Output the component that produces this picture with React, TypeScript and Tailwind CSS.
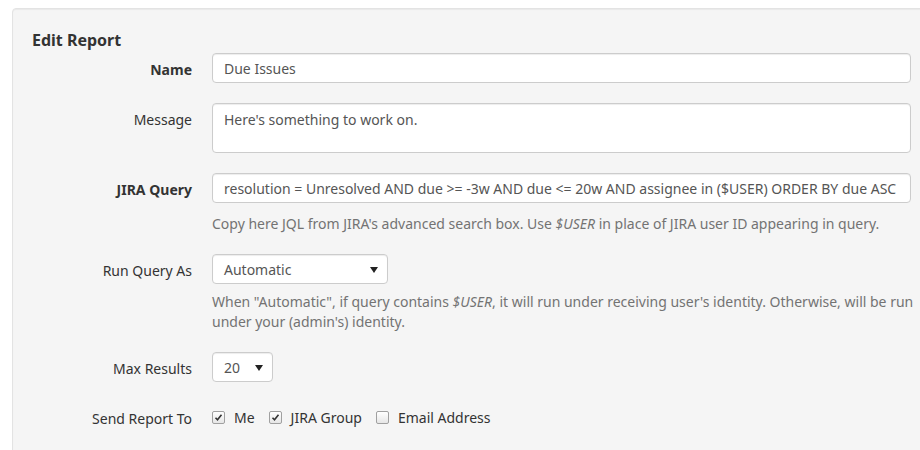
import React from 'react';

const inputCls =
  'h-[30px] rounded border border-[#cccccc] bg-white px-[11px] text-[14px] text-[#555] shadow-[inset_0_1px_1px_rgba(0,0,0,0.075)]';

function Caret() {
  return (
    <svg width="8" height="6" viewBox="0 0 8 6" className="absolute right-[9px] top-[12px]">
      <path d="M0 0h8L4 6z" fill="#222" />
    </svg>
  );
}

function Row({ label, bold, children, className }: { label: string; bold?: boolean; children: React.ReactNode; className?: string }) {
  return (
    <div className={`flex ${className ?? ''}`}>
      <div className={`w-[160px] shrink-0 pt-[6px] text-right ${bold ? 'font-bold' : ''}`}>{label}</div>
      <div className="ml-[20px] w-[699px] shrink-0">{children}</div>
    </div>
  );
}

function Check({ checked, label }: { checked?: boolean; label: string }) {
  return (
    <label className="mr-[14px] flex items-center">
      <span className="mr-[9px] flex h-[13px] w-[13px] items-center justify-center rounded-[2px] border border-[#a0a0a0] bg-gradient-to-b from-white to-[#e6e6e6]">
        {checked && (
          <svg width="9" height="9" viewBox="0 0 9 9">
            <path d="M1.5 4.8l2 2 4-5" stroke="#333" strokeWidth="1.6" fill="none" />
          </svg>
        )}
      </span>
      {label}
    </label>
  );
}

export default function App() {
  return (
    <div className="h-[450px] w-[920px] overflow-hidden bg-white pl-[12px] pt-[8px] [font-family:'Liberation_Sans',Arial,sans-serif] text-[14px] text-[#333]">
      <div className="h-[460px] w-[940px] rounded-[4px] border border-[#e3e3e3] bg-[#f5f5f5] pl-[19px] pt-[21px] shadow-[inset_0_1px_1px_rgba(0,0,0,0.05)]">
        <h2 className="text-[16px] font-bold leading-[20px]">Edit Report</h2>
        <Row label="Name" bold className="mt-[3px]">
          <div className={`${inputCls} flex w-full items-center`}>Due Issues</div>
        </Row>
        <Row label="Message" className="mt-[20px]">
          <div className={`${inputCls} h-[50px] w-full pt-[5px]`}>Here's something to work on.</div>
        </Row>
        <Row label="JIRA Query" bold className="mt-[20px]">
          <div className={`${inputCls} flex w-full items-center whitespace-nowrap px-[6px]`}>
            resolution = Unresolved AND due &gt;= -3w AND due &lt;= 20w AND assignee in ($USER) ORDER BY due ASC
          </div>
          <p className="mt-[10px] whitespace-nowrap text-[#737373]">
            Copy here JQL from JIRA's advanced search box. Use <i>$USER</i> in place of JIRA user ID appearing in query.
          </p>
        </Row>
        <Row label="Run Query As" className="mt-[20px]">
          <div className={`${inputCls} relative flex w-[176px] items-center`}>
            Automatic
            <Caret />
          </div>
          <p className="mt-[8px] w-[720px] leading-[20px] text-[#737373]">
            When "Automatic", if query contains <i>$USER</i>, it will run under receiving user's identity. Otherwise, will be run under your (admin's) identity.
          </p>
        </Row>
        <Row label="Max Results" className="mt-[20px]">
          <div className={`${inputCls} relative flex w-[61px] items-center`}>
            20
            <Caret />
          </div>
        </Row>
        <Row label="Send Report To" className="mt-[20px]">
          <div className="flex h-[30px] items-center text-[#333]">
            <Check checked label="Me" />
            <Check checked label="JIRA Group" />
            <Check label="Email Address" />
          </div>
        </Row>
      </div>
    </div>
  );
}
